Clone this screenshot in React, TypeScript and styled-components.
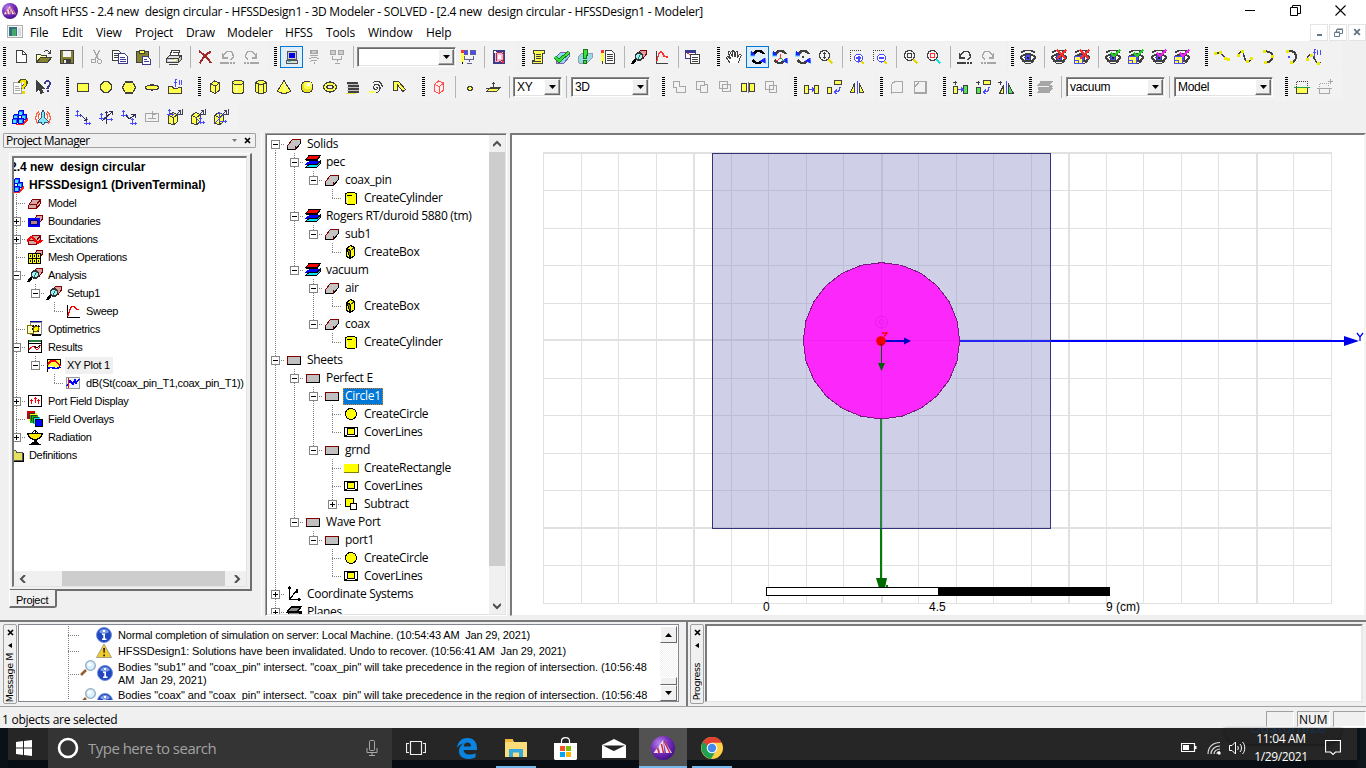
import React from "react";
import styled, { createGlobalStyle, css } from "styled-components";

const UI = `"Open Sans", "Noto Sans", sans-serif`;
const SANS = `"Liberation Sans", Arial, sans-serif`;
const K = "#404040";
const Y = "#ffff4d";
const B = "#4a4aff";
const G = "#a6a6a6";

const Global = createGlobalStyle`
  * { box-sizing: border-box; }
  body { margin: 0; background: #f0f0f0; overflow: hidden; }
  svg { display: block; flex: none; }
`;

/* ---------- icon drawings, all on a 16 x 16 grid ---------- */

const p = (d: string, stroke = K, fill = "none", w = 1) => (
  <path d={d} stroke={stroke} fill={fill} strokeWidth={w} />
);
const r = (x: number, y: number, w: number, h: number, fill: string) => (
  <rect x={x} y={y} width={w} height={h} fill={fill} />
);

const eye = (
  <>
    {p("M1 3.500C5 .5 11 .5 15 3.500", K, "none", 1.6)}
    {p("M.5 8.500C4 4 12 4 15.500 8.500C12 13.500 4 13.500 .5 8.500z", K, "#fff", 1.8)}
    <circle cx="8" cy="8.500" r="3" fill={B} stroke={K} />
    {r(7, 8, 2, 2, "#222")}
    {p("M2 11.500C6 16 11 15.500 14 11.500", K, "none", 1)}
  </>
);
const bluePlate = (
  <>
    {r(0, 7, 9, 8, B)}
    {r(1, 8, 7, 6, Y)}
    {p("M1 11.500h3v3", B)}
  </>
);
const redX = p("M6 1l9 9M15 1L6 10", "#ff2a2a", "none", 1.8);
const tick = (c: string) => p("M6 4l3 3l6-6", c, "none", 2);
const lens = (
  <>
    {p("M10 10l4.500 4.500", "#e8d800", "none", 2.4)}
    <circle cx="6.500" cy="6.500" r="5" fill="#f4f4f4" stroke={K} strokeWidth="1.300" />
  </>
);
const rotArrows = (c: string) => (
  <>
    {p("M4 4.500C6 1 11 1 14 5", c, "none", 2.4)}
    {p("M2.500 11C5 15 10 15 12.500 11.500", c, "none", 2.4)}
    {p("M0 7V3l5 4z", "#50d8ff", "#50d8ff", 0.5)}
    {p("M1 6V2l4 4z", "#2020ff", "#2020ff", 0.5)}
    {p("M16 15v-4h-5z", "#50d8ff", "#50d8ff", 0.5)}
    {p("M15 14V9l-5 3z", "#2020ff", "#2020ff", 0.5)}
  </>
);
const pcs = (c: string, screen: string) => (
  <>
    {r(1, 1, 6, 5, c)}
    {r(2, 2, 4, 3, screen)}
    {r(9, 1, 6, 5, c)}
    {r(10, 2, 4, 3, screen)}
    {p("M3.500 7v3.500h9V7M8 11v2M6 14.500h5", c)}
  </>
);
const axes = (x: number, y: number, c: string) => (
  <>
    {r(x + 2, y, 1, 7, c)}
    {r(x + 1, y + 1, 3, 1, c)}
    {r(x, y + 5, 7, 1, c)}
    {r(x + 5, y + 4, 1, 3, c)}
  </>
);
const solid = (
  <>
    {p("M1.500 11.500v-2l5-6h8v4l-5 6h-8z", "#000", "#c4c4c4")}
    {p("M1.500 10.500v-1l5-6h8v1", "#800000")}
    {p("M9.500 9.500v4", "#800000")}
  </>
);
const sheet = (
  <>
    {r(1, 4, 14, 9, "#000")}
    {p("M1.500 12V4.500H15", "#800000")}
    {r(2, 5, 12, 7, "#c0c0c0")}
  </>
);
const cube = (x: number, y: number) => (
  <>
    {p(`M${x} ${y + 3}l4-3l5 2v7l-4 3.500l-5-2z`, K, Y)}
    {p(`M${x} ${y + 3}l5 2v7.500M${x + 5} ${y + 5}l4-3`)}
  </>
);
const csTop = p("M9 6l4-4M10.500 1.500h3v3M15.500 0v5M11 5.500h5", "#404060");
const redBrick = (
  <>
    {p("M1.500 10.500l4-6h8v4l-4 5h-8z", "#800000", "#d8a8a8")}
    {p("M1.500 9.500h8l4-5M9.500 9.500v4", "#800000")}
  </>
);
const probe = (
  <>
    {p("M6 4.500l4-3h5v4l-3 4", "#800000", "#d8a0a0")}
    {p("M5 10l-4 5", "#000", "none", 2.6)}
    <circle cx="8" cy="7.500" r="3.600" fill="#a8f0f0" stroke="#333" strokeWidth="1.500" />
    {p("M7 9.500l2.500-4", "#108080")}
  </>
);
const blocks = (
  <>
    {p("M4 15.500h6l5-4v-3", "#ff2020", "none", 2)}
    {[[6.5, 1.5], [1.5, 5.5], [9.5, 5.5], [0.5, 9.5], [6.5, 9.5]].map(([x, y]) => (
      <g key={`${x}${y}`}>
        {p(`M${x} ${y + 1}l1-1h4v4l-1 1h-4z`, "#0000e8", "#2060ff")}
        {r(x + 0.5, y + 1.5, 3, 3, "#40e8ff")}
      </g>
    ))}
  </>
);

const ICONS: Record<string, React.ReactNode> = {
  new: <>{p("M3.500 1.500h6l4 4v8h-10z", K, "#fff")}{p("M9.500 1.500v4h4")}</>,
  open: <>{p("M.5 13.500v-8h4l1 1h5v3", K, "#ffffb0")}{p("M.5 13.500l4-5h11l-4 5z", K, "#84842c")}{p("M8 3C10 .5 12 1 14.500 4.500M14.500 1v3.500h-3")}</>,
  save: <>{p("M1.500 1.500h13v13h-13z", K, "#84842c")}{r(4, 2, 8, 6, "#f4f4f4")}{r(4, 10, 8, 4, K)}{r(5, 11, 2, 3, "#e8e8e8")}</>,
  cut: <>{p("M5 1l4 9M10.500 1l-4 9", G, "none", 1.4)}<circle cx="4.500" cy="12" r="2" fill="none" stroke={G} /><circle cx="10.500" cy="12.500" r="2" fill="none" stroke={G} /></>,
  copy: <>{p("M.5 1.500h6l2 2v8h-8z", K, "#fff")}{p("M2 4.500h4M2 6.500h4M2 8.500h4")}{p("M6.500 4.500h6l3 3v7h-9z", "#3a3a90", "#fff")}{p("M8 8.500h5M8 10.500h6M8 12.500h6", "#3a3a90")}</>,
  paste: <>{p("M1.500 2.500h12v11h-12z", K, "#84842c")}{r(4, 1, 6, 4, K)}{r(5, 2, 4, 2, Y)}{p("M7.500 7.500h5l3 3v4.500h-8z", "#3a3a90", "#fff")}{p("M9 10.500h3M9 12.500h5", "#3a3a90")}</>,
  print: <>{p("M4 6l2-5h8l-2 5z", K, "#fff")}{p("M6.500 3.500h5")}{p("M.5 9.500l3-3h11l-2 3z", K, "#ddd")}{p("M.5 9.500h12v4h-12zM12.500 13.500l3-3V6.500l-3 3z", K, "#ccc")}{r(2, 11, 8, 1, "#fff")}{r(8, 10, 3, 1, Y)}{p("M3 15.500h9")}</>,
  del: p("M2 2C6 5 11 9 14 14M14 2.500C9 5 5 10 2.500 14.500", "#a02828", "none", 2),
  undoG: <>{p("M3 8C5 1 12 1 13 5.500C14 8 12.500 10 10.500 10.500M2.500 4v5h5", G, "none", 1.4)}{p("M0 13.500h9M10 13.500h2M13 13.500h2", G, "none", 2)}</>,
  redoG: <>{p("M13 8C11 1 4 1 3 5.500C2 8 3.500 10 5.500 10.500M13.500 4v5h-5", G, "none", 1.4)}{p("M16 13.500H7M6 13.500H4M3 13.500H1", G, "none", 2)}</>,
  undo: <>{p("M3 8C5 1 12 1 13 5.500C14 8 12.500 10 10.500 10.500M2.500 4v5h5", K, "none", 1.4)}{p("M0 13.500h9M10 13.500h2M13 13.500h2", K, "none", 2)}</>,
  pc: <>{p("M3.500 2.500h9v8h-9z", "#555", "#ccc")}{r(5, 4, 6, 5, "#0000e8")}{p("M2.500 11.500h11v3h-11z", "#555", "#ddd")}{r(4, 12, 3, 1, "#4ad0d0")}</>,
  pcWifi: <>{r(4, 1, 8, 4, G)}{r(6, 2, 4, 2, "#ccc")}{r(4, 6, 8, 1, G)}{p("M3 10C6 8 10 8 13 10M4.500 12.500C7 10.500 9 10.500 11.500 12.500M8 13v2", G)}</>,
  pcNet: pcs(G, "#ccc"),
  pcEdit: <>{pcs("#606090", B)}{r(0, 1, 3, 3, "#ff3030")}{r(0, 4, 3, 9, Y)}{p("M1.500 13v2", "#000")}</>,
  queue: <>{r(2, 1, 12, 14, "#3a3a8c")}{r(4, 3, 8, 10, "#ffb0c0")}{p("M5 12V5l2-2h3l2 2v6l-2 1h-2", "#a03060")}{r(7, 6, 3, 4, "#fff")}{r(3, 2, 2, 2, "#fff")}{r(11, 12, 2, 2, "#ff3030")}</>,
  script: <>{p("M2.500 1.500h11v3h-2v10h-10v-3h2v-7h-1z", K, Y)}{p("M5 5.500h5M5 7.500h5M5 9.500h5M2 12.500h8")}</>,
  validate: <>{p("M2 8l5-5h8v5l-5 6H2z", "#8a5ab0", "#80dce8")}{p("M1 8l4 4L15 3", "#207020", "none", 3.6)}{p("M1 8l4 4L15 3", "#3ae03a", "none", 2)}</>,
  analyze: <>{p("M1 8l4-4h10v5l-5 5H2z", "#9a9ab8", "#90dce0")}{p("M6 .5h4v6l-1 3H7L6 6.500z", "#207020", "#3ae03a")}<circle cx="8" cy="13" r="2" fill="#3ae03a" stroke="#207020" /></>,
  notes: <>{r(1, 1, 3, 3, "#ff3030")}{r(1, 4, 3, 9, Y)}{p("M2.500 12v3")}{p("M5.500 1.500h6l3 3v10h-9z", K, "#fff")}{p("M7 5.500h6M7 7.500h6M7 9.500h6M7 11.500h6")}</>,
  probe,
  plot: <>{p("M2.500 2v12.500H14")}{p("M3 12C5 1 8 1 9.500 6.500C10 8 12 8 14 8", "#ff3030", "none", 1.4)}</>,
  report: <>{p("M.5 1.500h10v8H.5z", "#3a3a90", "#fff")}{p("M1 2.500h9", "#3a3a90", "none", 2)}{p("M2 5C5 4 7 7 9 7", "#ff3030")}{p("M5.500 5.500h9v9h-9z", K, "#fff")}{p("M7 8.500h6M7 10.500h6M7 12.500h6", K, "none", 1)}</>,
  hand: p("M4 14L1 9.500C0 8 2 7 3 8.500L4.500 10L2.500 4C2 2.500 4 2.500 4.500 3.500L6.500 8L6 2.500C6 1 8 1 8 2.500L9 8L10 3C10 1.500 12 2 12 3.500L11.500 8.500L13.500 5.500C14.500 4.500 15.500 5.500 15 7L12 14", K, "#fff"),
  rotate: rotArrows("#000"),
  rotateZ: <>{rotArrows(K)}{p("M8.500 5v4l-4 3", "#ff3030")}{p("M8.500 9l4 3", "#20a040")}</>,
  rotateC: <>{rotArrows(K)}{r(7, 7, 2, 2, K)}</>,
  zoomI: <>{lens}{p("M6.500 3v7M5 4.500h3M5 8.500h3")}</>,
  zoomIn: <><path d="M1.500 12V1.500H12" stroke={K} fill="none" strokeDasharray="1 1" />{p("M12 12l3 3", "#e8d800", "none", 2.4)}<circle cx="9.500" cy="9" r="4" fill="#fff" stroke={B} />{p("M7 9h5M9.500 6.500v5", B, "none", 2)}</>,
  zoomOut: <><path d="M1.500 12V1.500H12" stroke={K} fill="none" strokeDasharray="1 1" />{p("M12 12l3 3", "#e8d800", "none", 2.4)}<circle cx="9.500" cy="9" r="4" fill="#fff" stroke={B} />{p("M7 9h5", B, "none", 2)}</>,
  fitAll: <>{lens}{p("M4.500 4.500h4v4h-4z")}</>,
  fitSel: <>{p("M10 10l4.500 4.500", "#20e0e0", "none", 2.4)}<circle cx="6.500" cy="6.500" r="5" fill="#f4f4f4" stroke={K} strokeWidth="1.300" />{p("M4.500 4.500h4v4h-4z", "#ff3030", "none", 1.4)}</>,
  eye,
  eyeX: <>{eye}{redX}</>,
  eyeXp: <>{eye}{bluePlate}{redX}</>,
  eyeT: <>{eye}{tick("#20d020")}</>,
  eyeTp: <>{eye}{bluePlate}{tick("#20d020")}</>,
  eyeM: <>{eye}{tick("#f020f0")}</>,
  eyeMp: <>{eye}{bluePlate}{tick("#f020f0")}</>,
  line: <>{p("M2 4h4l7 6h2", K, "none", 1.6)}{r(0, 3, 3, 3, "#ece800")}{r(5, 2, 3, 3, "#ece800")}{r(10, 8, 3, 3, "#ece800")}{r(13, 9, 3, 3, "#ece800")}</>,
  spline: <>{p("M1 7C4 0 6 2 7 7S12 15 14 10", K, "none", 1.5)}{r(0, 5, 3, 3, "#ece800")}{r(4, 1, 3, 3, "#ece800")}{r(9, 11, 3, 3, "#ece800")}{r(13, 8, 3, 3, "#ece800")}</>,
  arc: <>{p("M4 2.500C15 1 15 13 6 13.500", K, "none", 2)}{r(3, 1, 3, 3, "#ece800")}{r(11, 6, 3, 3, "#ece800")}{r(4, 12, 3, 3, "#ece800")}</>,
  arcC: <>{p("M6 2C15 2 15 12 8 13.500", K, "none", 2)}{r(3, 1, 3, 3, "#ece800")}{r(5, 7, 2, 2, B)}{r(7, 12, 3, 3, "#ece800")}</>,
  eqCurve: <>{p("M1 10C4 3 6 5 8 9S12 16 15 13", K, "none", 1.4)}{r(0, 9, 3, 3, "#ece800")}{r(4, 5, 3, 3, "#ece800")}{r(11, 13, 3, 3, "#ece800")}{p("M10 .5C8 .5 8 2 8 8M6.500 3.500h3M11.500 1v5M14.500 1v5", B)}</>,
  help: <>{p("M1.500 3.500h8v11h-8z", G, "#fff")}{p("M3 7.500h4M3 9.500h5M3 11.500h5", G)}{p("M8 4C8 0 14 0 14 4C14 7 11 6.500 11 10", "#505010", "none", 3.6)}{p("M8.500 4C9 1 13.500 1 13.500 4C13.500 7 11 6.500 11 9.500", "#f4e400", "none", 2)}{r(9.5, 12, 3, 3, "#e8d800")}</>,
  whatIs: <>{p("M1.500 1.500v11l2.500-2.500l2 4.500l2-1l-2-4h3.500z", K, K)}{p("M10 5C10 1 15 1 15 4.500C15 7 12.500 7 12.500 9.500", "#3a3a90", "none", 2)}{r(11.5, 11, 2, 2, "#3a3a90")}</>,
  rect: p("M2.500 4.500h11v8h-11z", K, Y),
  circle: <circle cx="8" cy="8" r="5.500" fill={Y} stroke={K} strokeWidth="1.200" />,
  hex: p("M1.500 8.500l3-5.500h7l3 5.500l-3 5.500h-7z", K, Y, 1.2),
  ellipse: <ellipse cx="8" cy="8.500" rx="6.500" ry="2.500" fill={Y} stroke={K} strokeWidth="1.200" />,
  eqSurf: <>{p("M1.500 14.500V7.500h4l1 2h4l1-1h3v6z", K, Y)}{p("M9.500 .5h-1.500v7M6.500 3.500h3M12 .5v5M14.500 .5v5", B)}</>,
  box: cube(3.5, 2),
  cyl: <>{p("M2.500 3.500v10C5 15.500 11 15.500 13.500 13.500v-10", K, Y)}<ellipse cx="8" cy="3.500" rx="5.500" ry="2" fill={Y} stroke={K} />{p("M6.500 7v6", "#fff", "none", 1.6)}</>,
  prism: <>{p("M2.500 3.500l3-2h5l3 2v9l-3 2h-5l-3-2z", K, Y)}{p("M2.500 3.500l3 1.500h5l3-1.500M5.500 5v9.500M10.500 5v9.500")}</>,
  cone: <>{p("M8 1.500L1.500 12C4 15 12 15 14.500 12z", K, Y)}{p("M8.500 5v6", "#fff", "none", 1.4)}</>,
  sphere: <><circle cx="8" cy="8" r="6" fill="#e8e020" stroke={K} /><circle cx="9" cy="6.500" r="4" fill={Y} /><circle cx="9.500" cy="5.500" r="1.500" fill="#fff" /></>,
  torus: <><ellipse cx="8" cy="8" rx="6.500" ry="5" fill={Y} stroke={K} strokeWidth="1.300" /><ellipse cx="8" cy="8" rx="3" ry="1.800" fill="#f0f0f0" stroke={K} strokeWidth="1.300" /></>,
  helix: <>{p("M2 3.500h11M3 6.500h11M3 9.500h11M3 12.500h11", K, "none", 2)}{p("M1 14.500h10", "#e8e040")}{p("M2 5h12M2 8h12M2 11h12", "#c0c0c0")}</>,
  spiral: <>{p("M8 8.500C10 7 10 11 7.500 10.500C4 9.500 5.500 5 9 5.500C14 6 12.500 13.500 8 13.500M5 3.500C9 1 14 3 14.500 8", K, "none", 1.2)}{r(1, 12, 6, 2, Y)}</>,
  bend: <>{p("M2.500 11.500V2.500h5L14.500 10.500l-2.500 2L6 5.500v6z", K, Y)}</>,
  redBox: <>{p("M3.500 5.500l4-3.500l5 2v7l-4 3.500l-5-2z", "#ff5050", "#fff0f0")}{p("M3.500 5.500l5 2v7M8.500 7.500l4-3.500", "#ff5050")}</>,
  point: <circle cx="8" cy="9.500" r="2.200" fill={Y} stroke={K} strokeWidth="1.200" />,
  plane: <>{p("M1.500 12.500l4-4h10l-4 4z", K, Y)}{p("M8.500 3v7M7 4.500h3M1 9.500h14")}</>,
  unite: p("M2.500 2.500h6v5h6v6h-9v-5h-3z", G, "none", 1.3),
  subtract: p("M2.500 2.500h8v3h3v8h-7v-3h-4zM6.500 10.500v-4h4", G, "none", 1.3),
  intersect: p("M2.500 2.500h8v7h-8zM5.500 5.500h8v7h-8z", G, "none", 1.3),
  split: <>{p("M1.500 4.500h5v8h-5zM9.500 4.500h5v8h-5z", K, Y)}{p("M8.500 3v11", "#777")}</>,
  imprint: p("M2.500 2.500h8v8h-8zM6.500 6.500h7v7h-7z", G, "none", 1.1),
  move: <>{p("M1.500 6.500h4v8h-4zM11.500 6.500h4v8h-4z", K, Y)}{p("M6 10.500h5M9 8.500l2 2l-2 2", B)}</>,
  rotDup: <>{p("M8.500 1.500h7v4h-7zM1.500 8.500h4v6h-4z", K, Y)}{p("M14 8C14 12 12 13 9 13M11 10.500l-2.500 2.500l2 2", B, "none", 1.3)}</>,
  mirror: <>{p("M1.500 13.500h4v-9z", K, Y)}{p("M14.500 13.500h-4v-9z", K, Y)}{p("M8.500 2v13", B)}</>,
  fillet: p("M2.500 14.500V7C2.500 4 5 2.500 8 2.500h5.500v11h-11", G, "none", 1.3),
  chamfer: p("M2.500 14V8l5-5.500h6.500v11.500zM2.500 8V2.500h5", G, "none", 1.3),
  dupMove: <>{p("M1 3.500h4M3 1.500v4")}{p("M1.500 7.500h4v7h-4z", K, Y)}{p("M11.500 6.500h4v8h-4z", K, "#50e850")}{p("M6 10.500h5M9 8.500l2 2l-2 2", B)}</>,
  dupRot: <>{p("M1 3.500h4M3 1.500v4")}{p("M8.500 1.500h7v4h-7z", K, Y)}{p("M1.500 8.500h4v6h-4z", K, "#50e850")}{p("M14 8C14 12 12 13 9 13M11 10.500l-2.500 2.500l2 2", B, "none", 1.3)}</>,
  dupMir: <>{p("M0 3.500h4M2 1.500v4")}{p("M1.500 14.500h4v-8z", K, Y)}{p("M15.500 14.500h-5v-9z", K, "#50e850")}{p("M8.500 2v13", B)}</>,
  layersG: <>{p("M1 6.500l3-4h11l-3 4zM1 13.500l3-4h11l-3 4z", G, G, 1)}{p("M1 9.500h11l3-3", G, "none", 2.4)}</>,
  facePair: <><path d="M2.500 8V2.500h11V8" stroke={K} fill="none" strokeDasharray="1 1" />{p("M2.500 8.500h11v6h-11z", K, Y)}{p("M0 8.500h16", "#20a040")}</>,
  facePairG: <><path d="M2.500 8V4.500h9V8" stroke={G} fill="none" strokeDasharray="1 1" />{p("M2.500 9.500h10v5h-10zM0 9.500h15M11 2.500h5M13.500 0v5", G)}</>,
  blocks,
  rocket: <>{p("M8 1C10 3 10 6 10 9l3 3v1.500h-3.500L9 15H7l-.5-1.500H3V12l3-3C6 6 6 3 8 1z", "#305080", "#80e8f0")}{p("M4 2C0 6 0 11 3 15M12 2C16 6 16 11 13 15M5 4C3 6 3 8 4 9.500M11 4C13 6 13 8 12 9.500", "#ff6040", "none", 1.2)}</>,
  cs1: <>{axes(0, 1, B)}{axes(9, 9, B)}{p("M5 5l6 6M11.500 8v3.500h-3", "#303050")}</>,
  cs2: <>{axes(1, 4, B)}{p("M8.500 2v13M7 3.500h3M4 12l10-9M11 2.500h3.500v3", "#303050")}{p("M9 10.500h6M13.500 9v3", B)}</>,
  cs3: <>{axes(0, 1, B)}{axes(9, 9, B)}{p("M5 6l3 4l6-4M10 5.500h4.500v3", "#303050")}</>,
  cs4: p("M1.500 4.500h13v8h-13zM8.500 2v8M4 9.500h8M8 5.500h4", G),
  cs5: <>{cube(1.5, 3.5)}{csTop}{axes(0, 0, B)}</>,
  cs6: <>{cube(1.5, 3.5)}{csTop}{axes(8, 8, B)}{p("M5 8l6 6", B)}</>,
  cs7: <>{cube(1.5, 3.5)}{csTop}{p("M6.500 3v10M5 4.500h3M2 14l9-9M6 12.500h8M12.500 11v3", B)}</>,

  /* tree icons */
  solid,
  sheet,
  layers: <>{p("M1 5.500L4 1.500h11.500L12 5.500z", "#000", "#ff0000")}{p("M1 6.500h11l3-4", "#000")}{p("M1 10.500l4-3.500h10.500L12 10.500z", "#00f", "#0000ff")}{p("M1 13l3-2.500h8l3-3v2.500l-3 3z", "#000", "#00e8ff")}</>,
  tCyl: <>{p("M2.500 4v9l2 1.500h7l2-1.500V4l-2-1.500h-7z", "#000", "#ff0")}{p("M4 5.500h5", "#000")}{p("M12.500 5v9", "#ff0")}{r(4, 7, 1, 6, "#fff")}</>,
  tBox: <>{p("M3.500 4.500l4-3l4 2v8l-4 3l-4-2z", "#000", "#ff0")}{p("M3.500 4.500l4 2v8z", "#000", "#808000")}{p("M7.500 6.500l4-3")}</>,
  tCircle: <><circle cx="8" cy="8" r="5.500" fill="#ff0" stroke="#000" strokeWidth="1.100" /></>,
  tCover: <>{p("M1.500 3.500h13v9h-13z", "#000", "#fff")}{p("M4.500 4.500h7v6h-7z", "#000", "#ff0")}{p("M1.500 12.500l3-2M14.500 12.500l-3-2", "#000")}</>,
  tRect: <>{r(1, 4, 14, 8, "#ff0")}{p("M1 12.500h14V4", "#808000")}</>,
  tSub: <>{p("M2.500 2.500h8v8h-8z", "#000", "#ff0", 1.2)}{p("M7.500 7.500h6v6h-6z", "#000", "#fff", 1.2)}</>,
  tAxis: <>{p("M3.500 1v12.500H14M3.500 13.500L11 4M2 3l1.500-2L5 3M11 3v3.500M12 12l2 1.500l-2 1.500", "#000", "none", 1.2)}</>,
  tPlanes: <>{p("M1 8l4-5h10l-4 5zM1 11l3-3h11l-4 4z", "#000", "#888", 1.2)}{p("M2 14l3-2h8l2-3v3l-3 3z", "#000", "#444")}</>,
  brick: redBrick,
  bound: <>{p("M7.500 5.500l3-3.500h5v4l-3 4", "#800000", "#d8a8a8")}{p("M2 6h10v7H2z", "#0000ff", "#c08080", 2)}{p("M3.500 7.500h7v4h-7z", "#000080")}</>,
  excite: <>{redBrick}{p("M0 11C3 6 4 4 6.500 7.500S11 14 15 9", "#ff0000", "none", 2.2)}</>,
  mesh: <>{p("M8 5l2-3.500h5v4l-2 3", "#800000", "#d8a8a8")}{r(1, 4, 13, 11, "#000")}{[2, 6, 10].map((x) => [5, 10].map((y) => <g key={`${x}-${y}`}>{r(x, y, 3, 4, "#ff0")}{r(x + 1, y + 1, 1, 2, "#000")}</g>))}</>,
  opti: <>{r(3, 0, 12, 2, "#00a")}{p("M3.500 1.500h11v12h-11z", "#888", "#fff")}{p("M.5 4.500h6v8h-6z", "#807000", "#ffffc0")}{p("M9 4v8M5 8h8M6 5l6 6M12 5l-6 6", "#000", "none", 2.6)}{p("M9 4.500v7M5.500 8h7", "#ff0", "none", 2)}<circle cx="9" cy="8" r="2.500" fill="#ff0" stroke="#806000" />{r(5, 13, 9, 2, "#000")}</>,
  results: <>{p("M1.500 1.500h13v12h-13z", "#000", "#fff")}{r(2, 1, 12, 2, "#208040")}{p("M2 4.500h12", "#000")}{p("M2 11C5 6 7 7 8 9S12 11 13.500 6", "#f00")}{p("M7 7l3 2l3-3", "#000")}</>,
  xyPlot: <>{p("M1.500 2.500h13v12h-13z", "#000", "#ffff40")}{p("M2 12l4-3l4 3l4-2v4H2z", "#fff", "#fff")}{p("M2 8C5 1 10 3 14 9", "#f00", "none", 1.8)}{p("M2 12C6 7 9 15 14 10", "#00f", "none", 1.8)}</>,
  trace: <>{p("M1.500 2.500h13v11h-13z", "#999", "#e8f4ff")}{p("M2 11l3-5l3 3l2-4l1 3l3-4", "#00f", "none", 1.6)}{p("M3.500 3v10", "#f00")}</>,
  sweep: <>{p("M2.500 2v12.500H15", "#000")}{p("M3 13C6 2 8 2 10 4.500C11 7 12 7 14 6.500", "#f00", "none", 1.4)}</>,
  port: <>{p("M1.500 2.500h13v11h-13z", "#000", "#fff")}{p("M4.500 11V6M3 7.500h3M8.500 10V4M7 5.500h3M11.500 11V6M10 7.500h3", "#f00")}</>,
  overlays: <>{r(0, 0, 8, 8, "#d00000")}{r(2, 2, 8, 8, "#ff0")}{r(3, 4, 8, 8, "#00c000")}{r(6, 6, 7, 7, "#00e8ff")}{p("M2.500 8V2.500H8M4.500 10V4.500H10M6.500 12V6.500H12", "#333")}{p("M8.500 8.500h7v7h-7z", "#000", "#0000ff")}</>,
  radiation: <>{p("M.5 4.500h15l-2 4l-4 2h-3l-4-2z", "#000", "#ffe800")}{p("M8 .5v4M5 4l3-3l3 3", "#000")}{p("M7 11h2v2l3 2H4l3-2z", "#000", "#000")}</>,
  folder: <>{p("M1.500 13.500v-9l1-1h5l1 1.500h5.500v8.500z", "#555", "#e4e060")}{p("M1.500 14.500h13.500V6", "#000")}</>,
};

function Icon({ n, size = 16 }: { n: string; size?: number }) {
  return (
    <svg width={size} height={size} viewBox="0 0 16 16" shapeRendering="crispEdges">
      {ICONS[n]}
    </svg>
  );
}

function Ball({ size }: { size: number }) {
  return (
    <svg width={size} height={size} viewBox="0 0 24 24">
      <defs>
        <radialGradient id="ball" cx="35%" cy="30%" r="75%">
          <stop offset="0" stopColor="#b884e8" />
          <stop offset="0.500" stopColor="#7a30c0" />
          <stop offset="1" stopColor="#42108a" />
        </radialGradient>
      </defs>
      <circle cx="12" cy="12" r="12" fill="url(#ball)" />
      <path d="M2.500 17L7 11l1.500 6zM9 17L7.500 10.500L12 4l1.500 13zM15 17L12.500 4L21 17z" fill="#eee0ee" />
      <path d="M6.500 12l1.500 5M10.500 8l2 9M13 5l6 12" stroke="#c82840" strokeWidth="1.400" fill="none" />
    </svg>
  );
}

/* ---------- window chrome ---------- */

const Window = styled.div`
  width: 1366px;
  height: 768px;
  display: flex;
  flex-direction: column;
  background: #f0f0f0;
  font: 12px/16px ${UI};
  color: #000;
  overflow: hidden;
  white-space: pre;
`;
const TitleBar = styled.div`
  height: 23px;
  flex: none;
  background: #fff;
  display: flex;
  align-items: center;
  padding-left: 6px;
`;
const TitleText = styled.div`
  flex: 1;
  margin-left: 1px;
  letter-spacing: -0.243px;
`;
const TitleIcon = styled.div`
  margin: 0 0 2px -4px;
  padding-right: 4px;
`;
const Captions = styled.div`
  display: flex;
  width: 138px;
  justify-content: space-between;
  padding: 0 20px 3px 17px;
`;
const MenuBar = styled.div`
  height: 18px;
  flex: none;
  background: #fff;
  display: flex;
  align-items: center;
  padding-left: 7px;
`;
const MenuItem = styled.div<{ $w: number }>`
  width: ${(q) => q.$w}px;
  padding-top: 2px;
  letter-spacing: -0.15px;
`;
const MdiButtons = styled.div`
  margin-left: auto;
  display: flex;
  gap: 1px;
`;
const MdiButton = styled.div`
  width: 18px;
  height: 17px;
  border: 1px solid #e4e4e4;
  display: flex;
  align-items: center;
  justify-content: center;
`;

const MENU: [string, number][] = [
  ["File", 32], ["Edit", 34], ["View", 39], ["Project", 51], ["Draw", 41], ["Modeler", 58],
  ["HFSS", 41], ["Tools", 42], ["Window", 58], ["Help", 30],
];

/* ---------- toolbars ---------- */

const Toolbars = styled.div`
  height: 91px;
  flex: none;
  padding-top: 1px;
`;
const ToolRow = styled.div`
  display: flex;
  height: 30px;
`;
const Group = styled.div<{ $w: number; $pad: number }>`
  width: ${(q) => q.$w}px;
  height: 29px;
  flex: none;
  display: flex;
  align-items: center;
  padding-left: 3px;
  background: linear-gradient(#f2f2f2, #f2f2f2) 0 0 / calc(100% - 2px) 100% no-repeat;
  & > :nth-child(2) { margin-left: ${(q) => q.$pad - 6}px; }
`;
const Grip = styled.div`
  width: 3px;
  height: 20px;
  background: repeating-linear-gradient(#000 0 1px, #f0f0f0 1px 2px);
`;
const Tool = styled.div<{ $on?: boolean }>`
  width: 23px;
  height: 22px;
  flex: none;
  display: flex;
  align-items: center;
  padding-left: 3px;
  ${(q) => q.$on && css`
    border: 1px solid #0078d7;
    background: #e0eefa;
  `}
`;
const Sep = styled.div<{ $w: number }>`
  width: ${(q) => q.$w}px;
  height: 22px;
  flex: none;
  background: linear-gradient(#b4b4b4, #b4b4b4) center / 1px 100% no-repeat;
`;
const ComboBox = styled.div<{ $w: number }>`
  width: ${(q) => q.$w}px;
  height: 20px;
  flex: none;
  display: flex;
  align-items: center;
  background: #fff;
  border: 1px solid;
  border-color: #8a8a8a #fff #fff #8a8a8a;
  box-shadow: inset 1px 1px #696969, inset -1px -1px #e3e3e3;
  font: 12px/14px ${SANS};
  padding: 2px 1px 2px 3px;
  letter-spacing: -0.3px;
`;
const ComboArrow = styled.div`
  margin-left: auto;
  width: 16px;
  height: 16px;
  background: #f0f0f0;
  border: 1px solid;
  border-color: #fff #696969 #696969 #fff;
  box-shadow: inset -1px -1px #a0a0a0;
  display: flex;
  align-items: center;
  justify-content: center;
`;
const Tri = ({ d = "M0 0h7L3.500 4z", w = 7, h = 4, c = "#000" }) => (
  <svg width={w} height={h} viewBox={`0 0 ${w} ${h}`}>
    <path d={d} fill={c} />
  </svg>
);

type Item = string | number | { w: number; text: string };
interface ToolGroup { w: number; pad?: number; items: Item[] }

const ROWS: ToolGroup[][] = [
  [
    { w: 271, pad: 10, items: ["new", "open", "save", 7, "cut", "copy", "paste", 8, "print", 8, "del", "undoG", "redoG"] },
    { w: 248, items: ["*pc", "pcWifi", "pcNet", 8, { w: 99, text: "" }, 2, "pcEdit", 7, "queue"] },
    { w: 195, items: ["script", "validate", "analyze", "notes", 8, "probe", "plot", 8, "report"] },
    { w: 294, items: ["hand", "*rotate", "rotateZ", "rotateC", "zoomI", 8, "zoomIn", "zoomOut", 8, "fitAll", "fitSel", 8, "undo", "redoG"] },
    { w: 194, items: ["eye", 8, "eyeX", "eyeXp", 8, "eyeT", "eyeTp", "eyeM", "eyeMp"] },
    { w: 142, items: ["line", "spline", "arc", "arcC", "eqCurve"] },
  ],
  [
    { w: 63, items: ["help", "whatIs"] },
    { w: 132, items: ["rect", "circle", "hex", "ellipse", "eqSurf"] },
    { w: 224, items: ["box", "cyl", "prism", "cone", "sphere", "torus", "helix", "spiral", "bend"] },
    { w: 240, items: ["redBox", 8, "point", "plane", 8, { w: 49, text: "XY" }, 9, { w: 79, text: "3D" }] },
    { w: 132, items: ["unite", "subtract", "intersect", "split", "imprint"] },
    { w: 86, items: ["move", "rotDup", "mirror"] },
    { w: 63, items: ["fillet", "chamfer"] },
    { w: 86, items: ["dupMove", "dupRot", "dupMir"] },
    { w: 256, pad: 8, items: ["layersG", 9, { w: 99, text: "vacuum" }, 9, { w: 99, text: "Model" }] },
    { w: 63, items: ["facePair", "facePairG"] },
  ],
  [
    { w: 63, items: ["blocks", "rocket"] },
    { w: 178, items: ["cs1", "cs2", "cs3", "cs4", "cs5", "cs6", "cs7"] },
  ],
];

const Gap = styled.div`
  width: 2px;
`;

function ToolItem({ item }: { item: Item }) {
  if (typeof item === "number") return item < 5 ? <Gap /> : <Sep $w={item} />;
  if (typeof item === "string") {
    const on = item[0] === "*";
    return <Tool $on={on}><Icon n={on ? item.slice(1) : item} /></Tool>;
  }
  return (
    <ComboBox $w={item.w}>
      {item.text}
      <ComboArrow><Tri /></ComboArrow>
    </ComboBox>
  );
}

/* ---------- trees ---------- */

interface Node {
  t: string;
  i?: string;
  bold?: boolean;
  state?: "sel" | "dim";
  plus?: boolean;
  kids?: Node[];
}

const dotsV = "repeating-linear-gradient(to bottom, #808080 0 1px, transparent 1px 2px)";
const dotsH = "repeating-linear-gradient(to right, #808080 0 1px, transparent 1px 2px)";

const TreeRow = styled.div`
  height: 18px;
  display: flex;
  align-items: center;
`;
const Guide = styled.div<{ $line: boolean }>`
  width: 19px;
  height: 18px;
  flex: none;
  ${(q) => q.$line && css`background: ${dotsV} 9px 0 / 1px 18px no-repeat;`}
`;
const Branch = styled.div<{ $first: boolean; $last: boolean }>`
  width: 19px;
  height: 18px;
  flex: none;
  padding: 5px 0 0 5px;
  background:
    ${dotsV} 9px ${(q) => (q.$first ? 9 : 0)}px / 1px ${(q) => (q.$last ? 10 : 18)}px no-repeat,
    ${dotsH} 9px 9px / 11px 1px no-repeat;
`;
const Expander = styled.div<{ $plus?: boolean }>`
  width: 9px;
  height: 9px;
  border: 1px solid #848484;
  background:
    linear-gradient(#000, #000) 1px 3px / 5px 1px no-repeat,
    ${(q) => q.$plus && "linear-gradient(#000, #000) 3px 1px / 1px 5px no-repeat,"}
    #fff;
`;
const IconCell = styled.div`
  width: 20px;
  flex: none;
  padding-left: 1px;
`;
const NodeText = styled.div<{ $bold?: boolean; $state?: string }>`
  padding: 0 2px;
  line-height: 16px;
  height: 17px;
  ${(q) => q.$bold && css`
    font-weight: bold;
    font-size: 12px;
    letter-spacing: 0;
  `}
  ${(q) => q.$state === "dim" && css`background: #f0f0f0; padding-right: 3px;`}
  ${(q) => q.$state === "sel" && css`
    background: #0078d7;
    color: #fff;
    outline: 1px dotted #e08020;
    outline-offset: -1px;
  `}
`;

function TreeNodes({ nodes, guides = [], root = true }: { nodes: Node[]; guides?: boolean[]; root?: boolean }) {
  return (
    <>
      {nodes.map((n, k) => {
        const last = k === nodes.length - 1;
        return (
          <React.Fragment key={k}>
            <TreeRow>
              {guides.map((g, j) => <Guide key={j} $line={g} />)}
              <Branch $first={root && k === 0} $last={last}>
                {(n.kids || n.plus) && <Expander $plus={n.plus} />}
              </Branch>
              <IconCell>{n.i && <Icon n={n.i} />}</IconCell>
              <NodeText $bold={n.bold} $state={n.state}>{n.t}</NodeText>
            </TreeRow>
            {n.kids && <TreeNodes nodes={n.kids} guides={[...guides, !last]} root={false} />}
          </React.Fragment>
        );
      })}
    </>
  );
}

const PROJECT: Node[] = [
  {
    t: "2.4 new  design circular", bold: true,
    kids: [
      {
        t: "HFSSDesign1 (DrivenTerminal)", i: "blocks", bold: true,
        kids: [
          { t: "Model", i: "brick" },
          { t: "Boundaries", i: "bound", plus: true },
          { t: "Excitations", i: "excite", plus: true },
          { t: "Mesh Operations", i: "mesh" },
          { t: "Analysis", i: "probe", kids: [{ t: "Setup1", i: "probe", kids: [{ t: "Sweep", i: "sweep" }] }] },
          { t: "Optimetrics", i: "opti" },
          {
            t: "Results", i: "results",
            kids: [{ t: "XY Plot 1", i: "xyPlot", state: "dim", kids: [{ t: "dB(St(coax_pin_T1,coax_pin_T1))", i: "trace" }] }],
          },
          { t: "Port Field Display", i: "port", plus: true },
          { t: "Field Overlays", i: "overlays" },
          { t: "Radiation", i: "radiation", plus: true },
        ],
      },
      { t: "Definitions", i: "folder" },
    ],
  },
];

const circleKids: Node[] = [{ t: "CreateCircle", i: "tCircle" }, { t: "CoverLines", i: "tCover" }];
const MODEL: Node[] = [
  {
    t: "Solids", i: "solid",
    kids: [
      { t: "pec", i: "layers", kids: [{ t: "coax_pin", i: "solid", kids: [{ t: "CreateCylinder", i: "tCyl" }] }] },
      { t: "Rogers RT/duroid 5880 (tm)", i: "layers", kids: [{ t: "sub1", i: "solid", kids: [{ t: "CreateBox", i: "tBox" }] }] },
      {
        t: "vacuum", i: "layers",
        kids: [
          { t: "air", i: "solid", kids: [{ t: "CreateBox", i: "tBox" }] },
          { t: "coax", i: "solid", kids: [{ t: "CreateCylinder", i: "tCyl" }] },
        ],
      },
    ],
  },
  {
    t: "Sheets", i: "sheet",
    kids: [
      {
        t: "Perfect E", i: "sheet",
        kids: [
          { t: "Circle1", i: "sheet", state: "sel", kids: circleKids },
          {
            t: "grnd", i: "sheet",
            kids: [
              { t: "CreateRectangle", i: "tRect" },
              { t: "CoverLines", i: "tCover" },
              { t: "Subtract", i: "tSub", plus: true },
            ],
          },
        ],
      },
      { t: "Wave Port", i: "sheet", kids: [{ t: "port1", i: "sheet", kids: circleKids }] },
    ],
  },
  { t: "Coordinate Systems", i: "tAxis", plus: true },
  { t: "Planes", i: "tPlanes", plus: true },
];

/* ---------- main area ---------- */

const Main = styled.div`
  height: 485px;
  flex: none;
  display: flex;
  padding-top: 1px;
`;
const ManagerPane = styled.div`
  width: 262px;
  padding: 0 5px 0 3px;
  border-right: 1px solid #fbfbfb;
  margin-right: 3px;
`;
const PaneHeader = styled.div`
  height: 15px;
  border: 1px solid #a0a0a0;
  border-radius: 1px;
  display: flex;
  align-items: center;
  padding: 0 4px 0 2px;
  letter-spacing: -0.35px;
`;
const PaneTitle = styled.div`
  flex: 1;
  letter-spacing: -0.55px;
`;
const HeaderMarks = styled.div`
  display: flex;
  align-items: center;
  gap: 7px;
`;
const TabFrame = styled.div`
  margin: 5px 0 0 6px;
  width: 243px;
  height: 438px;
  border: solid;
  border-width: 1px 2px 2px 1px;
  border-color: #fff #6e6e6e #6e6e6e #fff;
  padding: 2px 3px 2px 2px;
`;
const Sunken = styled.div`
  height: 100%;
  background: #fff;
  border: solid;
  border-width: 2px 1px 1px 2px;
  border-color: #767676 #e3e3e3 #e3e3e3 #767676;
  display: flex;
  flex-direction: column;
  overflow: hidden;
`;
const ProjectTree = styled.div`
  flex: 1;
  margin-left: -45px;
  font: 11px/16px ${SANS};
  letter-spacing: -0.32px;
`;
const HScroll = styled.div`
  height: 15px;
  flex: none;
  background: #f0f0f0;
  display: flex;
  align-items: center;
  padding: 0 5px;
`;
const HThumb = styled.div`
  width: 164px;
  height: 15px;
  margin: 0 8px 0 35px;
  background: #cdcdcd;
`;
const Tab = styled.div`
  margin: -1px 0 0 6px;
  width: 48px;
  height: 18px;
  background: #f0f0f0;
  border: solid;
  border-width: 0 2px 2px 1px;
  border-color: #6e6e6e #6e6e6e #6e6e6e #fff;
  border-radius: 0 0 3px 0;
  font: 11px/20px ${SANS};
  letter-spacing: -0.3px;
  padding-left: 6px;
  position: relative;
`;
const ModelPane = styled.div`
  width: 242px;
  height: 483px;
  background: #fff;
  border: 1px solid;
  border-color: #a0a0a0 #fff #fff #a0a0a0;
  box-shadow: inset 1px 1px #696969, inset -1px -1px #e3e3e3;
  padding: 1px 1px 1px 1px;
  display: flex;
  overflow: hidden;
`;
const ModelTree = styled.div`
  width: 223px;
  margin-left: -1px;
  height: 479px;
  flex: none;
  overflow: hidden;
  letter-spacing: -0.3px;
`;
const VScroll = styled.div`
  width: 16px;
  flex: none;
  background: #f0f0f0;
  display: flex;
  flex-direction: column;
  align-items: center;
  padding: 5px 0 4px;
`;
const VThumb = styled.div`
  width: 16px;
  height: 414px;
  margin: 4px 0 auto;
  background: #cdcdcd;
`;
const Viewport = styled.div`
  flex: 1;
  margin-left: 3px;
  height: 483px;
  background: #fff;
  border: solid;
  border-width: 2px 2px 1px 2px;
  border-color: #7a7a7a #f4f4f4 #eee #7a7a7a;
`;

const Chevron = ({ d, w = 8, h = 8 }: { d: string; w?: number; h?: number }) => (
  <svg width={w} height={h} viewBox="0 0 8 8"><path d={d} fill="none" stroke="#505050" strokeWidth="2" /></svg>
);

function Canvas() {
  const vx = Array.from({ length: 22 }, (_, i) => 543.5 + i * 37.5);
  const hy = Array.from({ length: 13 }, (_, i) => 153.3 + i * 37.5);
  const disc = Array.from({ length: 24 }, (_, i) => {
    const a = (i * Math.PI) / 12;
    return `${(881.5 + 78.2 * Math.cos(a)).toFixed(1)},${(340.8 + 78.2 * Math.sin(a)).toFixed(1)}`;
  }).join(" ");
  return (
    <svg width="852" height="480" viewBox="512 135 852 480">
      <g fill="#e1e1e1" shapeRendering="crispEdges">
        {vx.map((x, i) => <rect key={i} x={Math.floor(x)} y={153} width={i % 5 === 4 ? 2 : 1} height={451} />)}
        {hy.map((y, i) => <rect key={i} x={543} y={Math.floor(y) - (i % 5 === 0 ? 1 : 0)} width={789} height={i % 5 === 0 ? 2 : 1} />)}
      </g>
      <g shapeRendering="crispEdges">
        <rect x="881" y="340" width="464" height="2" fill="#0000ff" />
        <rect x="880" y="341" width="2" height="240" fill="#008000" />
        <rect x="712.500" y="153.500" width="338" height="375" fill="#8888c4" fillOpacity="0.400" stroke="#33337a" />
        <rect x="881" y="340" width="169" height="2" fill="#2424f4" />
        <rect x="880" y="341" width="2" height="187" fill="#248440" />
      </g>
      <polygon points={disc} fill="#fb27fb" stroke="#7a1a80" shapeRendering="crispEdges" />
      <g fill="none" stroke="#e61ae8">
        <path d="M881.500 263v155M804 340.500h78M882 340.500h77" strokeOpacity="0.350" />
        <circle cx="881.500" cy="322" r="6" strokeOpacity="0.800" />
        <circle cx="881.500" cy="322" r="2.500" strokeOpacity="0.800" />
      </g>
      <rect x="885" y="340" width="20" height="2" fill="#0000d0" />
      <path d="M904 337.500l7 3.500l-7 3.500z" fill="#0000c0" />
      <path d="M881.500 344v20" stroke="#006400" />
      <path d="M878 363h7l-3.500 8z" fill="#006400" />
      <circle cx="881" cy="341" r="4.800" fill="#f00000" />
      <path d="M882 333h5l-3 3.500" fill="none" stroke="#f00" strokeWidth="1.300" />
      <path d="M880 343l3 2l-2 1z" fill="#800000" />
      <path d="M1344 336l15 5l-15 5z" fill="#0000e8" />
      <path d="M1357 333l3 4l3-4M1360 337v4" fill="none" stroke="#0000ff" strokeWidth="1.300" />
      <path d="M876 578h11l-2 10h-6z" fill="#006a00" />
      <rect x="886" y="585" width="2" height="2" fill="#008000" />
      <g shapeRendering="crispEdges">
        <rect x="766.500" y="587.500" width="343" height="8" fill="#fff" stroke="#000" />
        <rect x="938" y="587" width="172" height="9" fill="#000" />
      </g>
      <g fontFamily="Liberation Sans, Arial, sans-serif" fontSize="12" fill="#000">
        <text x="763" y="611">0</text>
        <text x="929" y="611">4.5</text>
        <text x="1106" y="611">9 (cm)</text>
      </g>
    </svg>
  );
}

/* ---------- message and progress docks ---------- */

const Docks = styled.div`
  height: 90px;
  flex: none;
  display: flex;
  padding-top: 3px;
  border-bottom: 1px solid #a0a0a0;
`;
const Dock = styled.div<{ $w: number; $split?: boolean }>`
  width: ${(q) => q.$w}px;
  height: 86px;
  flex: none;
  border-top: 2px solid #7a7a7a;
  border-right: ${(q) => (q.$split ? "2px solid #7a7a7a" : "0")};
  display: flex;
  padding: 2px 0 0 ${(q) => (q.$split ? 3 : 2)}px;
`;
const SideTab = styled.div`
  width: 14px;
  height: 80px;
  flex: none;
  border: 1px solid #a0a0a0;
  border-radius: 2px;
  display: flex;
  flex-direction: column;
  align-items: center;
  padding-top: 4px;
  gap: 7px;
`;
const SideText = styled.div<{ $top: number }>`
  writing-mode: vertical-rl;
  transform: rotate(180deg);
  margin-top: ${(q) => q.$top}px;
  font: 9.5px/12px "DejaVu Sans", sans-serif;
  letter-spacing: -0.4px;
`;
const MessageBox = styled.div`
  width: 661px;
  height: 78px;
  margin-left: 1px;
  background: #fff;
  border: 1px solid #828790;
  display: flex;
  padding: 1px;
  overflow: hidden;
`;
const Messages = styled.div`
  flex: 1;
  font: 11px/13px ${SANS};
  overflow: hidden;
`;
const MessageRow = styled.div<{ $h: number; $track: number }>`
  height: ${(q) => q.$h}px;
  display: flex;
  margin-left: 48px;
  padding-top: 3px;
  letter-spacing: ${(q) => q.$track}px;
  background:
    ${dotsV} 0 0 / 1px 100% no-repeat,
    ${dotsH} 0 ${(q) => (q.$h > 20 ? 16 : 9)}px / 11px 1px no-repeat;
`;
const MessageMarks = styled.div<{ $tall: boolean }>`
  width: 50px;
  padding-left: 12px;
  flex: none;
  display: flex;
  & > :last-child { margin-top: ${(q) => (q.$tall ? 4 : -2)}px; margin-left: auto; margin-right: 6px; }
  & > :first-child:not(:last-child) { margin-top: -1px; }
`;
const ClassicScroll = styled.div`
  width: 17px;
  background: repeating-conic-gradient(#f0f0f0 0 25%, #fff 0 50%) 0 0 / 2px 2px;
  display: flex;
  flex-direction: column;
`;
const Raised = styled.div<{ $h: number; $top?: number }>`
  height: ${(q) => q.$h}px;
  margin-top: ${(q) => q.$top ?? 0}px;
  flex: none;
  background: #f0f0f0;
  border: 1px solid;
  border-color: #fff #696969 #696969 #fff;
  display: flex;
  align-items: center;
  justify-content: center;
`;
const ProgressBox = styled.div`
  width: 658px;
  height: 78px;
  margin-left: 1px;
  background: #fff;
  border: solid;
  border-width: 2px 2px 1px 2px;
  border-color: #7a7a7a #e8e8e8 #e3e3e3 #7a7a7a;
`;

const Cross = ({ c = "#000", s = 7 }) => (
  <svg width={s} height={s} viewBox="0 0 7 7"><path d="M1 1l5 5M6 1L1 6" stroke={c} strokeWidth="1.700" /></svg>
);
const Info = () => (
  <svg width="16" height="16" viewBox="0 0 16 16">
    <circle cx="8" cy="8" r="7.500" fill="#2248c0" stroke="#6f8fdc" />
    <path d="M3 5C5 1 11 1 13 5C10 7 6 7 3 5z" fill="#7f9fe8" />
    <rect x="7" y="3" width="2" height="2" fill="#fff" />
    <path d="M6 6.500h3v5h1.500v1.500h-4.500v-1.500h1.300V8H6z" fill="#fff" />
  </svg>
);
const Warn = () => (
  <svg width="16" height="16" viewBox="0 0 16 16">
    <path d="M8 1l7.500 13.500H.5z" fill="#f2cc28" stroke="#a8a088" strokeLinejoin="round" />
    <path d="M7.200 5h1.800l-.4 5h-1zM7.300 11.500h1.600v1.700H7.300z" fill="#111" />
  </svg>
);
const Magnifier = () => (
  <svg width="17" height="16" viewBox="0 0 17 16">
    <path d="M1 15l5-5" stroke="#906028" strokeWidth="2.500" />
    <circle cx="10.500" cy="5.500" r="4.800" fill="#d8f0ff" stroke="#90a8c0" strokeWidth="1.300" />
    <circle cx="9.500" cy="4.500" r="2" fill="#fff" />
  </svg>
);

const MESSAGES: { h: number; track: number; kind: "info" | "warn"; zoom?: boolean; text: string }[] = [
  { h: 16, track: -0.18, kind: "info", text: "Normal completion of simulation on server: Local Machine. (10:54:43 AM  Jan 29, 2021)" },
  { h: 16, track: -0.13, kind: "warn", text: "HFSSDesign1: Solutions have been invalidated. Undo to recover. (10:56:41 AM  Jan 29, 2021)" },
  { h: 28, track: -0.08, kind: "info", zoom: true, text: "Bodies \"sub1\" and \"coax_pin\" intersect. \"coax_pin\" will take precedence in the region of intersection. (10:56:48\nAM  Jan 29, 2021)" },
  { h: 28, track: -0.07, kind: "info", zoom: true, text: "Bodies \"coax\" and \"coax_pin\" intersect. \"coax_pin\" will take precedence in the region of intersection. (10:56:48" },
];

/* ---------- status bar and taskbar ---------- */

const StatusBar = styled.div`
  height: 21px;
  flex: none;
  display: flex;
  align-items: flex-end;
  gap: 3px;
  padding: 0 0 1px 2px;
`;
const StatusText = styled.div`
  flex: 1;
  line-height: 14px;
  letter-spacing: -0.25px;
`;
const StatusCell = styled.div<{ $w: number }>`
  width: ${(q) => q.$w}px;
  height: 16px;
  border: 1px solid;
  border-color: #a0a0a0 #fff #fff #a0a0a0;
  padding-left: 1px;
  line-height: 16px;
`;
const Taskbar = styled.div`
  height: 40px;
  flex: none;
  display: flex;
  background: linear-gradient(#262626 0 32px, #070d12 32px);
  position: relative;
`;
const StartSlot = styled.div`
  width: 48px;
  border-left: 8px solid #0a1218;
  display: flex;
  align-items: center;
  padding-left: 8px;
`;
const Search = styled.div`
  width: 344px;
  background: #343434;
  display: flex;
  align-items: center;
  padding: 0 14px 0 9px;
  color: #a2a2a2;
  font-size: 15px;
  letter-spacing: -0.52px;
`;
const SearchText = styled.div`
  margin-left: 9px;
  flex: 1;
  line-height: 20px;
`;
const TaskSlot = styled.div<{ $on?: boolean; $run?: boolean; $wide?: boolean }>`
  width: 48px;
  margin-right: ${(q) => (q.$wide ? 3 : 1)}px;
  display: flex;
  align-items: center;
  justify-content: center;
  background: ${(q) => (q.$on ? "#525252" : "transparent")};
  ${(q) => q.$run && css`
    background-image: linear-gradient(#76b9ed, #76b9ed);
    background-repeat: no-repeat;
    background-position: center bottom;
    background-size: ${q.$on ? "48px" : "40px"} 2px;
  `}
`;
const Tray = styled.div`
  margin-left: auto;
  display: flex;
  align-items: center;
  color: #fff;
  position: relative;
  & > :nth-child(2) { margin: 0 8px 0 10px; }
`;
const Clock = styled.div`
  width: 66px;
  margin: 0 11px 0 2px;
  text-align: center;
  line-height: 18px;
  letter-spacing: -0.35px;
  font-size: 12px;
`;
const Ghost = styled.div`
  position: absolute;
  left: 1224px;
  top: 0;
  width: 118px;
  height: 16px;
  border-radius: 0 0 16px 16px;
  background: #232323;
  box-shadow: 0 1px 3px #181818;
  color: #1b3048;
  font: 16px/18px Roboto, sans-serif;
  text-align: right;
  padding-right: 16px;
  overflow: hidden;
  span { position: relative; top: -9px; }
`;
const TaskEdge = styled.div`
  width: 9px;
  height: 40px;
  margin-left: 16px;
  background: #0b1319;
  border-right: 6px solid #0f181d;
`;

export default function App() {
  return (
    <Window>
      <Global />
      <TitleBar>
        <TitleIcon><Ball size={16} /></TitleIcon>
        <TitleText>Ansoft HFSS - 2.4 new  design circular - HFSSDesign1 - 3D Modeler - SOLVED - [2.4 new  design circular - HFSSDesign1 - Modeler]</TitleText>
        <Captions>
          <svg width="11" height="11" viewBox="0 0 11 11"><path d="M0 5.500h10" stroke="#000" /></svg>
          <svg width="11" height="11" viewBox="0 0 11 11"><path d="M.5 2.500h7v8h-7zM2.500 2.500v-2h8v8h-3" stroke="#000" fill="none" /></svg>
          <svg width="11" height="11" viewBox="0 0 11 11"><path d="M.5.5l10 10M10.500.5l-10 10" stroke="#000" strokeWidth="1.100" /></svg>
        </Captions>
      </TitleBar>
      <MenuBar>
        <svg width="16" height="14" viewBox="0 0 16 14">
          <rect x=".5" y=".5" width="15" height="12" fill="#f4f4f4" stroke="#b0b0b0" />
          <rect x="2" y="2" width="8" height="9" fill="#2f6f80" />
          <rect x="5" y="4" width="4" height="7" fill="#48a868" />
          <rect x="11" y="3" width="3" height="8" fill="#d4dce8" />
        </svg>
        <MenuItem $w={7} />
        {MENU.map(([t, w]) => <MenuItem key={t} $w={w}>{t}</MenuItem>)}
        <MdiButtons>
          <MdiButton><svg width="9" height="9"><path d="M2 7h5" stroke="#667788" strokeWidth="2" /></svg></MdiButton>
          <MdiButton><svg width="9" height="9"><path d="M.5 4.500h5v4h-5zM2.500 4V1.500h6v4h-3M1 4h5M3 1h6" stroke="#667788" fill="none" /></svg></MdiButton>
          <MdiButton><Cross c="#667788" s={8} /></MdiButton>
        </MdiButtons>
      </MenuBar>
      <Toolbars>
        {ROWS.map((row, i) => (
          <ToolRow key={i}>
            {row.map((g, j) => (
              <Group key={j} $w={g.w} $pad={g.pad ?? 9}>
                <Grip />
                {g.items.map((it, k) => <ToolItem key={k} item={it} />)}
              </Group>
            ))}
          </ToolRow>
        ))}
      </Toolbars>

      <Main>
        <ManagerPane>
          <PaneHeader>
            <PaneTitle>Project Manager</PaneTitle>
            <HeaderMarks><Tri w={5} h={3} d="M0 0h5L2.500 3z" c="#777" /><Cross /></HeaderMarks>
          </PaneHeader>
          <TabFrame>
            <Sunken>
              <ProjectTree><TreeNodes nodes={PROJECT} /></ProjectTree>
              <HScroll>
                <Chevron d="M6 0L2 4l4 4" />
                <HThumb />
                <Chevron d="M2 0l4 4l-4 4" />
              </HScroll>
            </Sunken>
          </TabFrame>
          <Tab>Project</Tab>
        </ManagerPane>
        <ModelPane>
          <ModelTree><TreeNodes nodes={MODEL} /></ModelTree>
          <VScroll>
            <Chevron d="M0 6l4-4l4 4" />
            <VThumb />
            <Chevron d="M0 2l4 4l4-4" />
          </VScroll>
        </ModelPane>
        <Viewport><Canvas /></Viewport>
      </Main>

      <Docks>
        <Dock $w={688} $split>
          <SideTab>
            <Cross />
            <Tri w={4} h={5} d="M4 0v5L0 2.500z" />
            <SideText $top={-2}>Message M</SideText>
          </SideTab>
          <MessageBox>
            <Messages>
              {MESSAGES.map((m, i) => (
                <MessageRow key={i} $h={m.h} $track={m.track}>
                  <MessageMarks $tall={!!m.zoom}>
                    {m.zoom && <Magnifier />}
                    {m.kind === "info" ? <Info /> : <Warn />}
                  </MessageMarks>
                  {m.text}
                </MessageRow>
              ))}
            </Messages>
            <ClassicScroll>
              <Raised $h={17}><Tri d="M0 4h7L3.500 0z" /></Raised>
              <Raised $h={8} $top={34} />
              <Raised $h={16}><Tri /></Raised>
            </ClassicScroll>
          </MessageBox>
        </Dock>
        <Dock $w={678}>
          <SideTab>
            <Cross />
            <Tri w={4} h={5} d="M4 0v5L0 2.500z" />
            <SideText $top={8}>Progress</SideText>
          </SideTab>
          <ProgressBox />
        </Dock>
      </Docks>

      <StatusBar>
        <StatusText>1 objects are selected</StatusText>
        <StatusCell $w={28} />
        <StatusCell $w={33}>NUM</StatusCell>
        <StatusCell $w={33} />
      </StatusBar>

      <Taskbar>
        <Ghost><span>Customize</span></Ghost>
        <StartSlot>
          <svg width="16" height="16" viewBox="0 0 16 16"><path d="M0 2l7-1v6.500H0zM8 .9L16 0v7.500H8zM0 8.500h7V15l-7-1zM8 8.500h8V16l-8-.9z" fill="#fff" /></svg>
        </StartSlot>
        <Search>
          <svg width="22" height="22" viewBox="0 0 22 22"><circle cx="11" cy="11" r="9" fill="none" stroke="#fff" strokeWidth="2.600" /></svg>
          <SearchText>Type here to search</SearchText>
          <svg width="12" height="18" viewBox="0 0 12 18"><rect x="3.500" y="1.500" width="5" height="10" rx="1" fill="none" stroke="#a8a8a8" /><path d="M1 9v4.500h10V9M6 14v2.500M3 16.500h6" fill="none" stroke="#a8a8a8" /></svg>
        </Search>
        <TaskSlot $wide>
          <svg width="20" height="14" viewBox="0 0 20 14"><path d="M4.500 .5h11v13h-11zM3 2.500H.5v9H3M17 2.500h2.500v9H17" fill="none" stroke="#eee" strokeWidth="1.200" /></svg>
        </TaskSlot>
        <TaskSlot>
          <svg width="20" height="21" viewBox="0 0 20 21">
            <path d="M0 10C1 3 5 0 10.500 0C17 0 20 4.500 20 10v2H6.500c.3 3 3 4.600 6 4.600c2.500 0 4.500-.7 6-1.600v4.200C16.500 20.400 14 21 11.500 21C5 21 1.500 17 2 12.500C2.300 9 4.500 6.500 7 5.500C4 5.800 1.500 7.500 0 10zM6.700 8.500H14C14 6 12.700 4.500 10.500 4.500S7 6 6.700 8.500z" fill="#0a84e0" />
          </svg>
        </TaskSlot>
        <TaskSlot $run>
          <svg width="22" height="19" viewBox="0 0 22 19">
            <path d="M0 1h8l1 2h13v15H0z" fill="#fbdc7a" />
            <path d="M0 0h8v3H0z" fill="#f0b93a" />
            <path d="M4 18v-8h14v8h-4v-4.500H8V18z" fill="#35a8e0" />
          </svg>
        </TaskSlot>
        <TaskSlot>
          <svg width="23" height="23" viewBox="0 0 23 23">
            <path d="M7.500 6V4C7.500-.5 15.500-.5 15.500 4v2" fill="none" stroke="#fff" strokeWidth="1.200" />
            <path d="M0 6h23v16l-1 1H1l-1-1z" fill="#fff" />
            <rect x="6" y="9" width="5" height="5" fill="#f35325" /><rect x="12" y="9" width="5" height="5" fill="#81bc06" />
            <rect x="6" y="15" width="5" height="5" fill="#05a6f0" /><rect x="12" y="15" width="5" height="5" fill="#ffba08" />
          </svg>
        </TaskSlot>
        <TaskSlot>
          <svg width="24" height="19" viewBox="0 0 24 19"><path d="M0 6L12 0l12 6v13H0z" fill="#fff" /><path d="M1 6.500h22L12 12l6 2.500L9.500 11z" fill="#262626" /></svg>
        </TaskSlot>
        <TaskSlot $on $run><Ball size={24} /></TaskSlot>
        <TaskSlot $run>
          <svg width="22" height="22" viewBox="0 0 22 22">
            <circle cx="11" cy="11" r="11" fill="#ffd043" />
            <path d="M11 11L1.500 5.500C5-1 17-1.500 20.500 5.500H11z" fill="#e34133" />
            <path d="M1.500 5.500C-1.500 11 1 20 10 22l5-8.500L11 11z" fill="#1ea055" />
            <path d="M1.500 5.500L6.500 14L11 8z" fill="#1ea055" />
            <path d="M3 4l4 6l4-4.500h9.500C17-1.500 7-1.500 3 4z" fill="#e34133" />
            <circle cx="11" cy="11" r="5.300" fill="#fff" /><circle cx="11" cy="11" r="4.200" fill="#4688f0" />
          </svg>
        </TaskSlot>
        <Tray>
          <svg width="16" height="10" viewBox="0 0 16 10"><path d="M.5 .5h13v8H.5z" fill="none" stroke="#fff" strokeWidth="1.200" /><rect x="2" y="2" width="6" height="5" fill="#fff" /><rect x="14" y="3" width="1.500" height="3" fill="#fff" /></svg>
          <svg width="14" height="14" viewBox="0 0 14 14"><path d="M1 13C1 6 6 1.500 13 1.500M4 13c0-4.500 4-8 9-8M7 13c0-3 3-5 6-5M10 13c0-1.500 1.500-2.500 3-2.500" fill="none" stroke="#ddd" strokeWidth="1.200" /><rect x="11" y="11" width="2.500" height="2.500" fill="#fff" /></svg>
          <svg width="17" height="14" viewBox="0 0 17 14"><path d="M.5 4.500h2.500l3.500-3.500v12L3 9.500H.5z" fill="none" stroke="#fff" /><path d="M8.500 5c1 1 1 3 0 4M11 3c2 2 2 6 0 8M13.500 1c3 3 3 9 0 12" fill="none" stroke="#fff" /></svg>
          <Clock>11:04 AM{"\n"}1/29/2021</Clock>
          <svg width="16" height="16" viewBox="0 0 16 16"><path d="M.5 .5h15v11.500h-5L8 14.500L5.500 12H.5z" fill="none" stroke="#fff" strokeWidth="1.200" /></svg>
          <TaskEdge />
        </Tray>
      </Taskbar>
    </Window>
  );
}
